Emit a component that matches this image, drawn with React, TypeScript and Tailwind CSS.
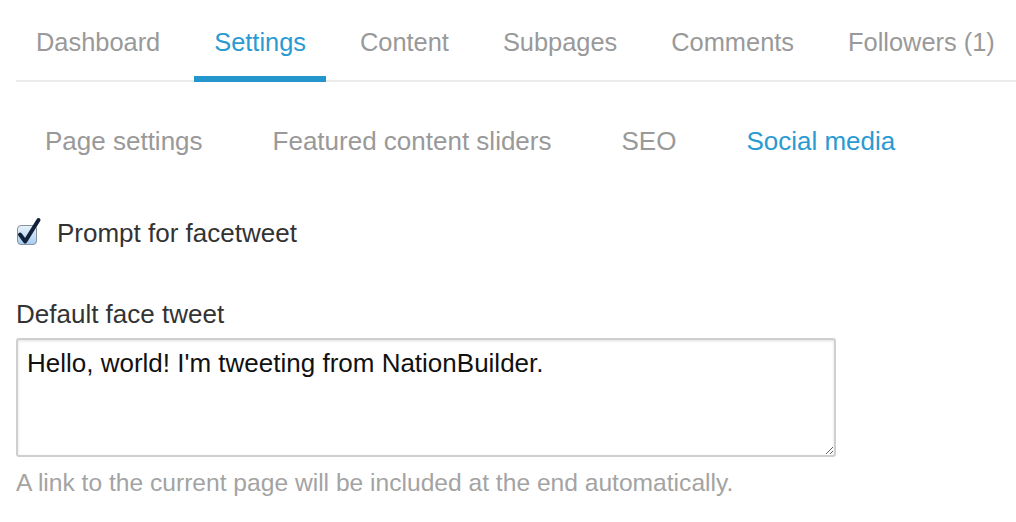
import React from "react";

const topTabs = ["Dashboard", "Settings", "Content", "Subpages", "Comments", "Followers (1)"];
const subTabs = ["Page settings", "Featured content sliders", "SEO", "Social media"];

function CheckboxIcon() {
  return (
    <svg width="28" height="30" viewBox="0 0 28 30" className="block">
      <defs>
        <linearGradient id="cbg" x1="0" y1="0" x2="0" y2="1">
          <stop offset="0" stopColor="#e9f2fb" />
          <stop offset="1" stopColor="#a6ccf1" />
        </linearGradient>
      </defs>
      <rect x="1.5" y="9.5" width="19" height="19" rx="3.5" fill="url(#cbg)" stroke="#8893a0" strokeWidth="1" />
      <path d="M4 18.5 L9.2 25.5 L22.5 4" fill="none" stroke="#12223a" strokeWidth="4" strokeLinecap="round" strokeLinejoin="round" />
    </svg>
  );
}

export default function App() {
  const font = { fontFamily: '"Liberation Sans", Arial, Helvetica, sans-serif' };
  return (
    <div className="w-[1016px] h-[522px] bg-white overflow-hidden" style={font}>
      <nav className="ml-4 flex gap-[14px] border-b-2 border-[#ebebeb]">
        {topTabs.map((t, i) => (
          <div
            key={t}
            className={
              "-mb-[2px] px-5 pt-[27px] pb-[19px] text-[25.4px] leading-[30px] border-b-[6px] whitespace-nowrap " +
              (i === 1 ? "border-[#2596cc] text-[#2a9bd2]" : "border-transparent text-[#999999]")
            }
          >
            {t}
          </div>
        ))}
      </nav>

      <div className="mt-[44px] ml-[45px] flex gap-[70px] text-[26px] leading-[30px]">
        {subTabs.map((t, i) => (
          <div key={t} className={"whitespace-nowrap " + (i === 3 ? "text-[#2a9bd2]" : "text-[#999999]")}>
            {t}
          </div>
        ))}
      </div>

      <div className="mt-[62px] ml-4 flex items-center">
        <div className="relative w-[22px] h-[30px]">
          <div className="absolute left-0 top-[-2px]">
            <CheckboxIcon />
          </div>
        </div>
        <span className="ml-[19px] text-[26px] leading-[30px] text-[#333333]">Prompt for facetweet</span>
      </div>

      <div className="mt-[51px] ml-4 text-[26px] leading-[30px] text-[#333333]">Default face tweet</div>

      <div className="ml-4 mt-[9px]">
        <textarea
          defaultValue="Hello, world! I'm tweeting from NationBuilder."
          className="block w-[820px] h-[119px] rounded-[3px] border-2 border-[#cfcfcf] bg-white px-[9px] pt-[8px] text-[26px] leading-[30px] text-[#111111] shadow-[inset_0_1px_3px_rgba(0,0,0,0.12)] outline-none"
          style={font}
        />
      </div>

      <div className="ml-4 mt-[12px] text-[24.6px] leading-[28px] text-[#a3a3a3]">
        A link to the current page will be included at the end automatically.
      </div>
    </div>
  );
}
